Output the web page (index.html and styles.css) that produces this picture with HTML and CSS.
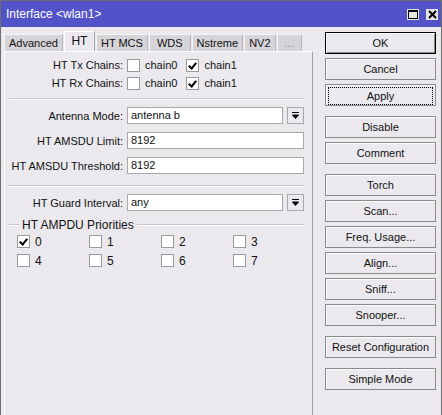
FILE: index.html
```html
<html>
<head>
  <link rel="stylesheet" href="styles.css">
</head>
<body>
  <div id="janela">
    <div id="titulo">
      <span>Interface &lt;wlan1&gt;</span>
      <div class="botoes-titulo">
        <div class="bt-titulo"><div class="quadrado"></div></div>
        <div class="bt-titulo">
          <svg width="9" height="9" viewBox="0 0 9 9"><path d="M1 1 L8 8 M8 1 L1 8" stroke="#000" stroke-width="2"/></svg>
        </div>
      </div>
    </div>

    <div id="conteudo">
      <div id="esquerda">
        <div id="abas">
          <div class="aba">Advanced</div>
          <div class="aba ativa">HT</div>
          <div class="aba">HT MCS</div>
          <div class="aba larga">WDS</div>
          <div class="aba">Nstreme</div>
          <div class="aba">NV2</div>
          <div class="aba larga reticencias">...</div>
        </div>

        <div id="painel">
          <div class="linha curta">
            <div class="rotulo">HT Tx Chains:</div>
            <div class="opcoes">
              <span class="caixa"></span><span class="txt">chain0</span>
              <span class="caixa marcada"></span><span class="txt">chain1</span>
            </div>
          </div>
          <div class="linha curta">
            <div class="rotulo">HT Rx Chains:</div>
            <div class="opcoes">
              <span class="caixa"></span><span class="txt">chain0</span>
              <span class="caixa marcada"></span><span class="txt">chain1</span>
            </div>
          </div>

          <div class="separador"></div>

          <div class="linha">
            <div class="rotulo">Antenna Mode:</div>
            <div class="campo">antenna b</div>
            <div class="seta"><svg width="9" height="9" viewBox="0 0 9 9"><path d="M1 1.5 H8 M4.5 7.5 L1.5 4 H7.5 Z" stroke="#000" fill="#000"/></svg></div>
          </div>
          <div class="linha">
            <div class="rotulo">HT AMSDU Limit:</div>
            <div class="campo">8192</div>
          </div>
          <div class="linha">
            <div class="rotulo">HT AMSDU Threshold:</div>
            <div class="campo">8192</div>
          </div>

          <div class="separador segundo"></div>

          <div class="linha">
            <div class="rotulo">HT Guard Interval:</div>
            <div class="campo">any</div>
            <div class="seta"><svg width="9" height="9" viewBox="0 0 9 9"><path d="M1 1.5 H8 M4.5 7.5 L1.5 4 H7.5 Z" stroke="#000" fill="#000"/></svg></div>
          </div>

          <div class="grupo">
            <div class="traco-curto"></div>
            <span>HT AMPDU Priorities</span>
            <div class="traco-longo"></div>
          </div>
          <div class="prioridades">
            <div class="item"><span class="caixa marcada"></span><span class="txt">0</span></div>
            <div class="item"><span class="caixa"></span><span class="txt">1</span></div>
            <div class="item"><span class="caixa"></span><span class="txt">2</span></div>
            <div class="item"><span class="caixa"></span><span class="txt">3</span></div>
            <div class="item"><span class="caixa"></span><span class="txt">4</span></div>
            <div class="item"><span class="caixa"></span><span class="txt">5</span></div>
            <div class="item"><span class="caixa"></span><span class="txt">6</span></div>
            <div class="item"><span class="caixa"></span><span class="txt">7</span></div>
          </div>
        </div>
      </div>

      <div id="direita">
        <div class="botao padrao">OK</div>
        <div class="botao">Cancel</div>
        <div class="botao foco"><span>Apply</span></div>
        <div class="espaco"></div>
        <div class="botao">Disable</div>
        <div class="botao">Comment</div>
        <div class="espaco"></div>
        <div class="botao">Torch</div>
        <div class="botao">Scan...</div>
        <div class="botao">Freq. Usage...</div>
        <div class="botao">Align...</div>
        <div class="botao">Sniff...</div>
        <div class="botao">Snooper...</div>
        <div class="espaco"></div>
        <div class="botao">Reset Configuration</div>
        <div class="espaco"></div>
        <div class="botao">Simple Mode</div>
      </div>
    </div>
  </div>
</body>
</html>
```

FILE: styles.css
```css
* {
    box-sizing: border-box;
    margin: 0;
    padding: 0;
}

body {
    font-family: "Liberation Sans", Arial, sans-serif;
    font-size: 11px;
    color: #111;
    background: #ebe9ed;
}

#janela {
    width: 442px;
    height: 415px;
    overflow: hidden;
    background: #ebe9ed;
    border-left: 1px solid #6e6e6e;
    border-right: 1px solid #6e6e6e;
    border-top: 1px solid #6e6e6e;
}

#titulo {
    height: 26px;
    background: #5252c9;
    color: #fff;
    font-size: 12px;
    display: flex;
    align-items: center;
    justify-content: space-between;
    padding: 0 3px 0 5px;
}

.botoes-titulo {
    display: flex;
    gap: 7px;
}

.bt-titulo {
    width: 12px;
    height: 11px;
    background: #e4e4e4;
    display: flex;
    align-items: center;
    justify-content: center;
}

.quadrado {
    width: 10px;
    height: 9px;
    border: 1px solid #000;
    border-top-width: 2px;
}

#conteudo {
    display: flex;
    padding: 4px 0 0 3px;
}

#esquerda {
    width: 309px;
}

#abas {
    display: flex;
    align-items: flex-end;
    height: 20px;
    gap: 1px;
}

.aba {
    height: 17px;
    line-height: 17px;
    padding: 0 4px;
    text-align: center;
    background: #d6d4d8;
    border-top: 1px solid #f4f4f4;
    border-left: 1px solid #f4f4f4;
    border-right: 1px solid #b8b6ba;
}

.aba.larga {
    padding: 0 7px;
}

.aba.ativa {
    width: 31px;
    height: 20px;
    line-height: 19px;
    background: #ebe9ed;
    border-top: 1px solid #fff;
    border-left: 1px solid #fff;
    border-right: 1px solid #a4a4a4;
    font-size: 12px;
}

.reticencias {
    color: #8a8a8a;
}

#painel {
    height: 380px;
    background: #ebe9ed;
    border-top: 1px solid #fff;
    border-left: 1px solid #fff;
    border-right: 1px solid #a0a0a0;
    padding: 4px 8px 0 0;
}

.linha {
    display: flex;
    align-items: center;
    height: 17px;
    margin-bottom: 8px;
}

.linha.curta {
    height: 18px;
    margin-bottom: 0;
}

.rotulo {
    width: 119px;
    text-align: right;
    padding-right: 1px;
    flex-shrink: 0;
}

.opcoes {
    display: flex;
    align-items: center;
    margin-left: 3px;
}

.caixa {
    display: inline-block;
    width: 13px;
    height: 13px;
    background: #fff;
    border: 1px solid #9a9a9a;
    flex-shrink: 0;
    position: relative;
}

.caixa.marcada::after {
    content: "";
    position: absolute;
    left: 3px;
    top: 1px;
    width: 3px;
    height: 6px;
    border-right: 2px solid #000;
    border-bottom: 2px solid #000;
    transform: rotate(40deg);
}

.txt {
    margin-left: 5px;
    margin-right: 9px;
}

.separador {
    height: 2px;
    border-top: 1px solid #c6c4c8;
    border-bottom: 1px solid #fff;
    margin: 6px 0 7px 4px;
}

.separador.segundo {
    margin-top: 11px;
}

.campo {
    flex: 1;
    height: 17px;
    line-height: 15px;
    margin-left: 3px;
    padding-left: 3px;
    background: #fff;
    border: 1px solid #a8a8a8;
}

.seta {
    width: 17px;
    height: 17px;
    margin-left: 4px;
    border: 1px solid #a8a8a8;
    background: #ebe9ed;
    display: flex;
    align-items: center;
    justify-content: center;
}

.grupo {
    display: flex;
    align-items: center;
    margin: -1px 0 4px 0;
    height: 13px;
    font-size: 12px;
}

.traco-curto {
    width: 10px;
    height: 2px;
    border-top: 1px solid #c6c4c8;
    border-bottom: 1px solid #fff;
    margin: 0 3px 0 4px;
}

.traco-longo {
    flex: 1;
    height: 2px;
    border-top: 1px solid #c6c4c8;
    border-bottom: 1px solid #fff;
    margin-left: 3px;
}

.prioridades {
    display: grid;
    grid-template-columns: 72px 72px 72px 72px;
    padding-left: 12px;
    row-gap: 6px;
}

.item {
    display: flex;
    align-items: center;
    height: 13px;
    font-size: 12px;
}

#direita {
    width: 111px;
    margin-left: 12px;
    padding-top: 1px;
    display: flex;
    flex-direction: column;
    gap: 4px;
}

.botao {
    height: 22px;
    line-height: 20px;
    text-align: center;
    background: #ebe9ed;
    border: 1px solid #8a8a8a;
    box-shadow: inset 1px 1px #fff;
}

.botao.padrao {
    border: 1px solid #000;
    box-shadow: inset 1px 1px #fff, inset -1px -1px #8a8a8a;
}

.botao.foco {
    padding: 2px;
    line-height: 16px;
}

.botao.foco span {
    display: block;
    border: 1px dotted #000;
}

.espaco {
    height: 2px;
}
```
